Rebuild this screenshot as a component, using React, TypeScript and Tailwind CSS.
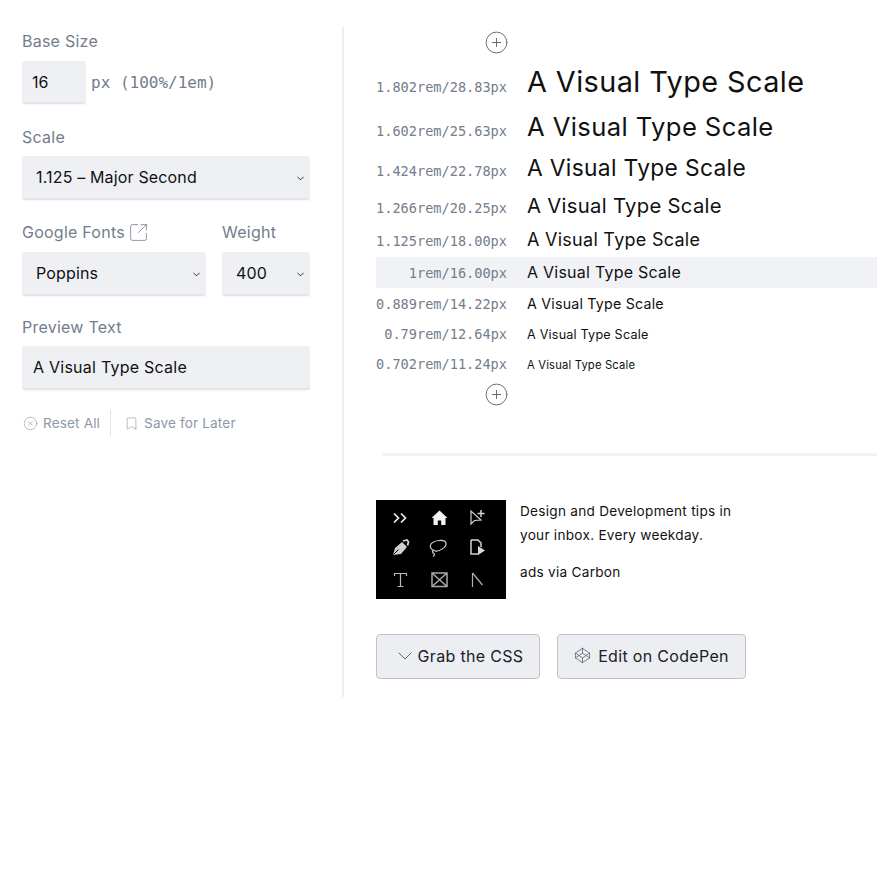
import React from "react";
import { ChevronDown, CircleX, Bookmark, CirclePlus, Codepen, SquareArrowOutUpRight } from "lucide-react";

const sans = "font-['Inter','Liberation_Sans',sans-serif]";
const mono = "font-['DejaVu_Sans_Mono','Liberation_Mono',monospace]";

const rows = [
  { label: "1.802rem/28.83px", size: "text-[28.83px] leading-[49px]", h: "h-[49px]" },
  { label: "1.602rem/25.63px", size: "text-[25.63px] leading-[41px]", h: "h-[41px]" },
  { label: "1.424rem/22.78px", size: "text-[22.78px] leading-[41px]", h: "h-[41px]" },
  { label: "1.266rem/20.25px", size: "text-[20.25px] leading-[35px]", h: "h-[35px]" },
  { label: "1.125rem/18.00px", size: "text-[18px] leading-[34px]", h: "h-[34px]" },
  { label: "1rem/16.00px", size: "text-[16px] leading-[31px]", h: "h-[31px]", active: true },
  { label: "0.889rem/14.22px", size: "text-[14.22px] leading-[31px]", h: "h-[31px]" },
  { label: "0.79rem/12.64px", size: "text-[12.64px] leading-[31px]", h: "h-[31px]" },
  { label: "0.702rem/11.24px", size: "text-[11.24px] leading-[31px]", h: "h-[31px]" },
];

const fieldBg = "bg-[#eef0f4] rounded-[3px] border-b-2 border-[#e2e6eb] shadow-[0_1px_2px_rgba(0,0,0,0.04)]";
const labelText = "text-[16px] leading-[24px] tracking-[0.015em] text-[#737d8c]";

function Select({ value, className }: { value: string; className: string }) {
  return (
    <div className={`relative h-[44px] ${className}`}>
      <select
        defaultValue={value}
        className={`w-full h-full appearance-none pl-[14px] pr-6 text-[16px] tracking-[0.01em] text-[#111] ${fieldBg} ${sans}`}
      >
        <option>{value}</option>
      </select>
      <ChevronDown size={11} strokeWidth={2} className="absolute right-[4px] top-[17px] text-[#222] pointer-events-none" />
    </div>
  );
}

function AdIcons() {
  const s = { stroke: "#d2d2d2", fill: "none", strokeWidth: 1.2 };
  return (
    <svg viewBox="0 0 130 99" width="130" height="99" className="block bg-black">
      <path d="M18 13.500l4.500 4.500-4.500 4.500M25 13.500l4.500 4.500-4.500 4.500" {...s} stroke="#eeeeee" strokeWidth={1.7} />
      <path d="M55.500 18l8-7.500 8 7.500h-2v7h-4.300v-4.500h-3.400V25h-4.300v-7z" fill="#f4f4f4" />
      <path d="M95 11v13l3.500-3.500 6.500-.5z" {...s} />
      <path d="M105 10v7M101.500 13.500h7" {...s} strokeWidth={1.5} />
      <path d="M17 55l2-7 7-6 5 5-6 7-8 1z" fill="#cfcfcf" />
      <path d="M17.500 54.500l5-5" stroke="#000" strokeWidth={1} />
      <path d="M27 41l4-1 1.500 2-1 3.500" {...s} strokeWidth={1.8} />
      <path d="M55 44c3-4 14-5 15-1 1 4-7 9-11 8-4-1-6-4-4-7z" {...s} />
      <path d="M58 50c-2 0-2 3 0 3.500 1 .5 0 2.500-1 3" {...s} />
      <path d="M95 40h7l3 3v4M95 40v14h7" {...s} strokeWidth={1.5} />
      <path d="M102 46l7 4.500-7 4.500z" fill="#d8d8d8" />
      <path d="M18.500 76v-2.500h12V76M24.500 73.500V86.500M21.500 86.500h6" {...s} stroke="#b8b8b8" />
      <path d="M56 73h15v13.500H56zM56 73l15 13.500M71 73L56 86.500" {...s} stroke="#a8a8a8" strokeWidth={1.5} />
      <path d="M96.500 73v14M96.500 73l10 12" {...s} stroke="#b0b0b0" />
    </svg>
  );
}

export default function App() {
  return (
    <div className={`w-[877px] h-[871px] bg-white flex items-start pt-[27px] overflow-hidden ${sans}`}>
      <aside className="w-[344px] h-[670px] shrink-0 border-r-2 border-[#eceef1] pl-[22px] pr-[32px]">
        <label className={`block mt-[2px] ${labelText}`}>Base Size</label>
        <div className="flex items-center mt-[8px] gap-[5px]">
          <input
            readOnly
            value="16"
            className={`w-[64px] h-[43px] px-[10px] text-[16px] text-[#111] ${fieldBg} ${sans}`}
          />
          <span className={`text-[16px] text-[#737d8c] ${mono}`}>px (100%/1em)</span>
        </div>
        <label className={`block mt-[21px] ${labelText}`}>Scale</label>
        <Select value="1.125 – Major Second" className="w-[288px] mt-[7px]" />
        <div className="flex gap-[16px] mt-[20px]">
          <div className="w-[184px]">
            <div className={`flex items-center gap-[3px] ${labelText}`}>
              Google Fonts
              <SquareArrowOutUpRight size={21} strokeWidth={0.9} className="text-[#737d8c]" />
            </div>
            <Select value="Poppins" className="w-[184px] mt-[8px]" />
          </div>
          <div className="w-[88px]">
            <div className={labelText}>Weight</div>
            <Select value="400" className="w-[88px] mt-[8px]" />
          </div>
        </div>
        <label className={`block mt-[19px] ${labelText}`}>Preview Text</label>
        <input
          readOnly
          value="A Visual Type Scale"
          className={`block w-[288px] h-[44px] mt-[7px] px-[11px] text-[16px] tracking-[0.015em] text-[#111] ${fieldBg} ${sans}`}
        />
        <div className="flex items-center h-[26px] mt-[20px] text-[13.6px] tracking-[0.01em] text-[#8d98a7]">
          <CircleX size={15} strokeWidth={1} className="ml-[1px] mr-[5px]" />
          Reset All
          <div className="w-px h-[26px] bg-[#dfe3e8] ml-[10px] mr-[13px]" />
          <Bookmark size={15} strokeWidth={1} className="mr-[5px]" />
          Save for Later
        </div>
      </aside>

      <main className="flex-1 pl-[32px]">
        <div className="w-[131px] flex justify-end h-[30px] items-center">
          <CirclePlus size={25} strokeWidth={0.9} className="text-[#5b6570] -mr-[2px]" />
        </div>
        {rows.map((r) => (
          <div key={r.label} className={`flex items-baseline ${r.h} ${r.active ? "bg-[#f0f2f5]" : ""}`}>
            <div className={`w-[131px] text-right text-[13.6px] text-[#737d8c] ${mono}`}>{r.label}</div>
            <div className={`ml-[20px] ${r.size} tracking-[0.015em] text-[#111]`}>A Visual Type Scale</div>
          </div>
        ))}
        <div className="w-[131px] flex justify-end items-center h-[27px]">
          <CirclePlus size={25} strokeWidth={0.9} className="text-[#5b6570] -mr-[2px]" />
        </div>
        <div className="h-[3px] bg-[#f1f3f5] ml-[6px] mt-[45px]" />
        <div className="flex mt-[44px]">
          <AdIcons />
          <div className="ml-[14px] -mt-px w-[240px] text-[13.6px] leading-[24px] tracking-[0.02em] text-[#111]">
            <p>Design and Development tips in your inbox. Every weekday.</p>
            <p className="mt-[13px]">ads via Carbon</p>
          </div>
        </div>
        <div className="flex gap-[17px] mt-[35px]">
          <button className="w-[164px] h-[45px] pb-[2px] flex items-center justify-center gap-[1px] bg-[#eceef2] border border-[#bcc3cc] rounded-[4px] text-[16px] tracking-[0.02em] text-[#1a202c]">
            <ChevronDown size={24} strokeWidth={0.9} className="text-[#4a5568]" />
            Grab the CSS
          </button>
          <button className="w-[189px] h-[45px] pb-[2px] flex items-center justify-center gap-[7px] bg-[#eceef2] border border-[#bcc3cc] rounded-[4px] text-[16px] tracking-[0.02em] text-[#1a202c]">
            <Codepen size={17} strokeWidth={1} className="text-[#4a5568]" />
            Edit on CodePen
          </button>
        </div>
      </main>
    </div>
  );
}
